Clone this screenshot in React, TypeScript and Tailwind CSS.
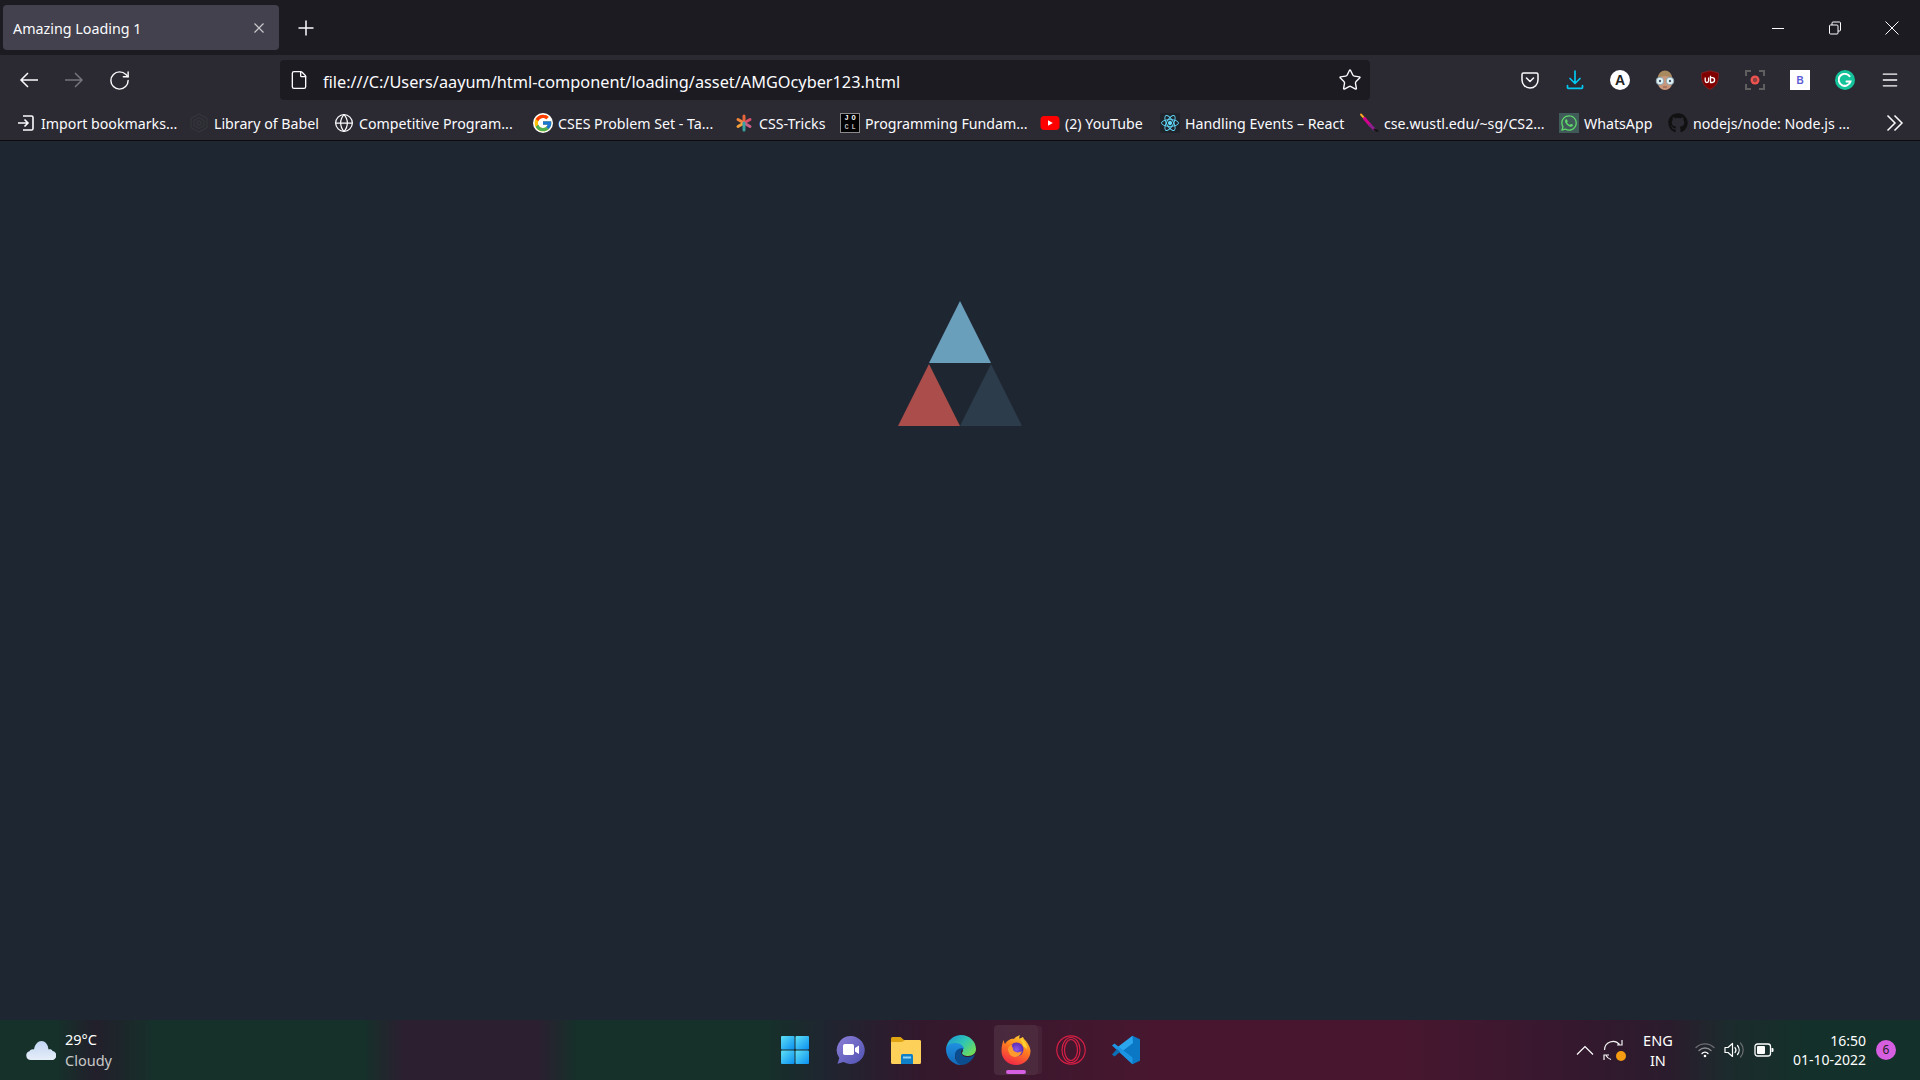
import { File, Globe, Menu, RotateCw, Star } from "lucide-react";
import { FcGoogle } from "react-icons/fc";
import { FaGithub, FaWhatsapp } from "react-icons/fa";

const FONT = "font-['Noto_Sans','Open_Sans',sans-serif]";

function ImportIcon() {
  return (
    <svg width="20" height="20" viewBox="0 0 20 20" fill="none" stroke="#fbfbfe" strokeWidth="1.6">
      <path d="M7 3h8.500a1.500 1.500 0 0 1 1.500 1.500v11a1.500 1.500 0 0 1-1.500 1.500H7" />
      <path d="M2 10h10M8.500 6.500 12 10l-3.500 3.500" />
    </svg>
  );
}

function BabelIcon() {
  return (
    <svg width="20" height="20" viewBox="0 0 20 20" fill="none" stroke="#34343a" strokeWidth="1.4">
      <path d="M10 1 18 5.500v9L10 19l-8-4.500v-9z" />
      <path d="M10 4.500 15 7.300v5.400l-5 2.800-5-2.800V7.300z" />
      <circle cx="10" cy="10" r="2" />
    </svg>
  );
}

function CssTricksIcon() {
  return (
    <svg width="18" height="18" viewBox="0 0 18 18" strokeWidth="3" strokeLinecap="round">
      <path d="M9 9V2" stroke="#e8653a" />
      <path d="M9 9 3 5.500" stroke="#f0863a" />
      <path d="M9 9l6-3.500" stroke="#d8506a" />
      <path d="M9 9 3 12.500" stroke="#f0a03a" />
      <path d="M9 9l6 3.500" stroke="#c9608a" />
      <path d="M9 9v7" stroke="#3aa0a0" />
    </svg>
  );
}

function JoclIcon() {
  return (
    <div className="grid h-5 w-5 grid-cols-2 place-items-center border border-[#8a8a8a] bg-black px-[2px] font-['Liberation_Mono',monospace] text-[7px] leading-[8px] font-bold text-white">
      <span>J</span>
      <span>O</span>
      <span className="text-[#bbbbbb]">C</span>
      <span className="text-[#bbbbbb]">L</span>
    </div>
  );
}

function YoutubeIcon() {
  return (
    <svg width="20" height="20" viewBox="0 0 20 20">
      <rect x="0.500" y="3" width="19" height="14" rx="4" fill="#f00" />
      <path d="M8 7.200v5.600l4.800-2.800z" fill="#fff" />
    </svg>
  );
}

function ReactIcon() {
  return (
    <div className="flex h-5 w-5 items-center justify-center rounded-[2px] bg-[#20232a]">
      <svg width="20" height="20" viewBox="0 0 20 20" fill="none" stroke="#61dafb" strokeWidth="0.900">
        <ellipse cx="10" cy="10" rx="8.500" ry="3.400" />
        <ellipse cx="10" cy="10" rx="8.500" ry="3.400" transform="rotate(60 10 10)" />
        <ellipse cx="10" cy="10" rx="8.500" ry="3.400" transform="rotate(120 10 10)" />
        <circle cx="10" cy="10" r="1.700" fill="#61dafb" />
      </svg>
    </div>
  );
}

function FeatherIcon() {
  return (
    <svg width="20" height="20" viewBox="0 0 20 20" fill="none" strokeWidth="3" strokeLinecap="round">
      <path d="M2 1.500 6 6" stroke="#f5a623" strokeWidth="2" />
      <path d="M5.500 5.500l6 7" stroke="#d6008f" />
      <path d="M11 12l4.500 4.500" stroke="#8e1f8f" />
      <path d="M15.500 16.500l3 1.500" stroke="#151515" strokeWidth="2" />
    </svg>
  );
}

function WhatsappIcon() {
  return (
    <div className="flex h-5 w-5 items-center justify-center bg-[#3f5a58]">
      <FaWhatsapp className="h-[18px] w-[18px] text-[#5fd86a]" />
    </div>
  );
}

const bookmarks = [
  { label: "Import bookmarks...", width: "w-[173px]", icon: <ImportIcon /> },
  { label: "Library of Babel", width: "w-[145px]", icon: <BabelIcon /> },
  { label: "Competitive Program...", width: "w-[199px]", icon: <Globe size={20} strokeWidth={1.5} color="#fbfbfe" /> },
  { label: "CSES Problem Set - Ta...", width: "w-[201px]", icon: <FcGoogle className="h-5 w-5 rounded-full bg-white" /> },
  { label: "CSS-Tricks", width: "w-[106px]", icon: <CssTricksIcon /> },
  { label: "Programming Fundam...", width: "w-[200px]", icon: <JoclIcon /> },
  { label: "(2) YouTube", width: "w-[120px]", icon: <YoutubeIcon /> },
  { label: "Handling Events – React", width: "w-[199px]", icon: <ReactIcon /> },
  { label: "cse.wustl.edu/~sg/CS2...", width: "w-[200px]", icon: <FeatherIcon /> },
  { label: "WhatsApp", width: "w-[109px]", icon: <WhatsappIcon /> },
  { label: "nodejs/node: Node.js ...", width: "w-[200px]", icon: <FaGithub className="h-5 w-5 text-[#111111]" /> },
];

function Pocket() {
  return (
    <svg width="20" height="20" viewBox="0 0 20 20" fill="none" stroke="#fbfbfe" strokeWidth="1.500" strokeLinecap="round" strokeLinejoin="round">
      <path d="M3.500 3h13A1.500 1.500 0 0 1 18 4.500V10a8 8 0 0 1-16 0V4.500A1.500 1.500 0 0 1 3.500 3z" />
      <path d="m6.500 8 3.500 3.500L13.500 8" />
    </svg>
  );
}

function DownloadIcon() {
  return (
    <svg width="20" height="20" viewBox="0 0 20 20" fill="none" stroke="#00c8f0" strokeWidth="1.700" strokeLinecap="round" strokeLinejoin="round">
      <path d="M10 1v12M5 8.500l5 5 5-5M2.500 15.500v2a.8.800 0 0 0 .8.8h13.400a.8.800 0 0 0 .8-.8v-2" />
    </svg>
  );
}

function LetterA() {
  return (
    <div className="flex h-5 w-5 items-center justify-center rounded-full bg-white font-['Liberation_Sans',sans-serif] text-[14px] font-bold text-[#222222]">
      A
    </div>
  );
}

function Glasses() {
  return (
    <svg width="20" height="20" viewBox="0 0 20 20">
      <path d="M3 8a7 7 0 0 1 14 0v5a7 7 0 0 1-14 0z" fill="#c9967a" />
      <path d="M3 8a7 7.500 0 0 1 14 0q-7-4-14 0z" fill="#a98a5f" />
      <circle cx="5" cy="11" r="3.800" fill="#dff2f5" stroke="#8fa3ad" strokeWidth="1" />
      <circle cx="15" cy="11" r="3.800" fill="#dff2f5" stroke="#8fa3ad" strokeWidth="1" />
      <circle cx="5" cy="11" r="1.200" fill="#445566" />
      <circle cx="15" cy="11" r="1.200" fill="#445566" />
      <path d="M8 17h4" stroke="#8a5a4a" strokeWidth="1" />
    </svg>
  );
}

function UBlock() {
  return (
    <svg width="18" height="20" viewBox="0 0 18 20">
      <path d="M9 .8 17.500 3c.3 8-1.500 13-8.500 16.500C2 16 .2 11 .5 3z" fill="#800000" stroke="#8a2a2a" strokeWidth="0.700" />
      <path d="M4.200 7.500v3.300a1.700 1.700 0 0 0 3.400 0V7.500M9.500 5.800v6.700h1.700a2.400 2.400 0 0 0 0-4.800H9.500" fill="none" stroke="#fff" strokeWidth="1.300" />
    </svg>
  );
}

function Recorder() {
  return (
    <svg width="20" height="20" viewBox="0 0 20 20" fill="none">
      <path d="M1 6V1h5M14 1h5v5M19 14v5h-5M6 19H1v-5" stroke="#5f5f5f" strokeWidth="2" />
      <circle cx="10" cy="10" r="4.500" fill="#ef5350" />
      <circle cx="10" cy="10" r="2.200" fill="#8a4040" />
    </svg>
  );
}

function Bitly() {
  return (
    <div className="flex h-5 w-5 items-center justify-center bg-white font-['Liberation_Sans',sans-serif] text-[10px] font-bold text-[#5b5bd6]">
      B
    </div>
  );
}

function Grammarly() {
  return (
    <div className="flex h-5 w-5 items-center justify-center rounded-full bg-[#15c39a]">
      <svg width="14" height="14" viewBox="0 0 14 14" fill="none" stroke="#fff" strokeWidth="2" strokeLinecap="round">
        <path d="M11.500 3.200A6 6 0 1 0 12.500 8.500H8.500" />
      </svg>
    </div>
  );
}

const toolbarIcons = [
  <Pocket key="pocket" />,
  <DownloadIcon key="download" />,
  <LetterA key="a" />,
  <Glasses key="glasses" />,
  <div key="ublock" className="flex w-5 justify-center"><UBlock /></div>,
  <Recorder key="rec" />,
  <Bitly key="bitly" />,
  <Grammarly key="grammarly" />,
  <Menu key="menu" size={20} strokeWidth={1.6} color="#fbfbfe" />,
];

function WinLogo() {
  return (
    <svg width="30" height="30" viewBox="0 0 30 30">
      <defs>
        <linearGradient id="win" x1="0" y1="0" x2="1" y2="1">
          <stop offset="0" stopColor="#5ee0f5" />
          <stop offset="1" stopColor="#0a8ff0" />
        </linearGradient>
      </defs>
      <rect x="1" y="1" width="13.500" height="13.500" rx="1" fill="url(#win)" />
      <rect x="15.500" y="1" width="13.500" height="13.500" rx="1" fill="url(#win)" />
      <rect x="1" y="15.500" width="13.500" height="13.500" rx="1" fill="url(#win)" />
      <rect x="15.500" y="15.500" width="13.500" height="13.500" rx="1" fill="url(#win)" />
    </svg>
  );
}

function ChatLogo() {
  return (
    <svg width="30" height="30" viewBox="0 0 30 30">
      <defs>
        <linearGradient id="chat" x1="0" y1="0" x2="1" y2="1">
          <stop offset="0" stopColor="#8c7fd6" />
          <stop offset="1" stopColor="#4f52b2" />
        </linearGradient>
      </defs>
      <path d="M15.500 1a14 14 0 1 1-7 26l-6 1.800 1.800-5.800A14 14 0 0 1 15.500 1z" fill="url(#chat)" />
      <rect x="8" y="9" width="11" height="11" rx="1.800" fill="#fff" />
      <path d="m20 13 4-2.500v8.500L20 16.500z" fill="#fff" />
    </svg>
  );
}

function FolderLogo() {
  return (
    <svg width="30" height="28" viewBox="0 0 30 28">
      <path d="M0 2.500A1.500 1.500 0 0 1 1.500 1h8l3.500 3h15A2 2 0 0 1 30 6v4H0z" fill="#e0a412" />
      <path d="M0 6h11l3-2h14.500A1.500 1.500 0 0 1 30 5.500v21a1.500 1.500 0 0 1-1.500 1.500h-27A1.500 1.500 0 0 1 0 26.500z" fill="#fdd05a" />
      <path d="M10 19.500A1.500 1.500 0 0 1 11.500 18h9a1.500 1.500 0 0 1 1.500 1.500V28H10z" fill="#0f7fc8" />
      <rect x="12" y="20.500" width="8" height="2" fill="#8fd4f5" />
    </svg>
  );
}

function EdgeLogo() {
  return (
    <svg width="30" height="30" viewBox="0 0 30 30">
      <defs>
        <linearGradient id="edgeA" x1="0" y1="0" x2="1" y2="0.700">
          <stop offset="0" stopColor="#1b8fd8" />
          <stop offset="0.550" stopColor="#2fc4b4" />
          <stop offset="1" stopColor="#6fdc5a" />
        </linearGradient>
        <linearGradient id="edgeB" x1="0" y1="0" x2="0" y2="1">
          <stop offset="0" stopColor="#1f8fe0" />
          <stop offset="1" stopColor="#1268b8" />
        </linearGradient>
      </defs>
      <path d="M0 14C1 5 8 0 15 0c9 0 15 7 15 14 0 4-3 7-8 7-3 0-6-1-6-3 0-1 1-1 1-3 0-3-3-6-7-6-5 0-10 2-10 5z" fill="url(#edgeA)" />
      <path d="M0 14c0-4 5-6 10-6 4 0 8 3 8 6-6 0-9 3-9 7 0 4 3 8 8 9C8 31 0 24 0 14z" fill="url(#edgeB)" />
      <path d="M9 20c0-4 3-7 8-7 0 2-2 2-2 4 0 3 3 5 7 5 3 0 5-1 7-3-2 6-7 11-14 11-3-1-6-5-6-10z" fill="#0b4d8e" />
    </svg>
  );
}

function FirefoxLogo() {
  return (
    <svg width="30" height="30" viewBox="0 0 30 30">
      <defs>
        <linearGradient id="fx" x1="0.700" y1="0" x2="0.300" y2="1">
          <stop offset="0" stopColor="#ffd22e" />
          <stop offset="0.450" stopColor="#ff7a1f" />
          <stop offset="1" stopColor="#f0254a" />
        </linearGradient>
        <radialGradient id="fxc">
          <stop offset="0" stopColor="#8a5ae8" />
          <stop offset="1" stopColor="#5a2bb5" />
        </radialGradient>
      </defs>
      <path d="M2.500 5C3 7 3.500 8 4 9 6 5 11 3 13 4c1-2 4-3 6-4-1 2-1 3 0 4 1-1 2-2 3-2 1 3 3 3 5 7 2 3 2.500 6 2.500 7A14.500 14 0 0 1 .5 16C.5 11 1.500 8 2.500 5z" fill="url(#fx)" />
      <circle cx="15.500" cy="14.500" r="7" fill="url(#fxc)" />
      <path d="M7 14c0-2 2-4 5-5-2 2-1 3 0 4-1 4 5 6 9 3-1 4-4 6-7 6-4 0-7-4-7-8z" fill="#ff9a2e" />
      <path d="M19 3c4 2 7 6 7 11l-4-3c0-3-2-5-3-8z" fill="#ffd22e" />
    </svg>
  );
}

function OperaLogo() {
  return (
    <svg width="30" height="30" viewBox="0 0 30 30" fill="none" stroke="#d71f45" strokeWidth="1.200">
      <circle cx="15" cy="15" r="14.200" />
      <ellipse cx="15" cy="15" rx="9" ry="12.500" />
      <ellipse cx="15" cy="15" rx="6.500" ry="10.500" />
    </svg>
  );
}

function VsCodeLogo() {
  return (
    <svg width="30" height="30" viewBox="0 0 30 30">
      <path d="M21.500 0.800 29 4.200v21.600l-7.500 3.400L6.300 15z" fill="#0a78c4" />
      <path d="M21.500 0.800 22 8l-11 8.500-5-4z" fill="#2aa5ee" />
      <path d="M1 10.500l2.500-2 18 14v6.700z" fill="#1b95e3" />
      <path d="M1 19.500l2.500 2L9 17l-3-3z" fill="#0a6fb5" />
    </svg>
  );
}

function Battery() {
  return (
    <svg width="20" height="14" viewBox="0 0 20 14" fill="none">
      <rect x="1" y="1" width="15.500" height="12" rx="2.500" stroke="#ffffff" strokeWidth="1.300" />
      <rect x="3" y="3" width="8" height="8" rx="1" fill="#ffffff" />
      <path d="M17.500 5h1a1 1 0 0 1 1 1v2a1 1 0 0 1-1 1h-1z" fill="#ffffff" />
    </svg>
  );
}

function SyncIcon() {
  return (
    <div className="relative h-[22px] w-[22px]">
      <svg width="22" height="22" viewBox="0 0 22 22" fill="none" stroke="#f4f4f4" strokeWidth="1.200">
        <path d="M1.500 11a8.500 8.500 0 0 1 15-5.500M19 1v5h-5" />
        <path d="M8 20.500A8.500 8.500 0 0 1 3 16.500M1 21v-5h5" />
      </svg>
      <span className="absolute right-[-1px] bottom-[0px] h-[10px] w-[10px] rounded-full bg-[#f59c12]" />
    </div>
  );
}

function WifiIcon() {
  return (
    <svg width="20" height="16" viewBox="0 0 20 16" fill="none" strokeWidth="1.300" strokeLinecap="round">
      <path d="M1 5.500a13 13 0 0 1 18 0" stroke="#6d6d72" />
      <path d="M4 8.500a8.500 8.500 0 0 1 12 0" stroke="#8d8d92" />
      <path d="M7 11.500a4 4 0 0 1 6 0" stroke="#ffffff" />
      <circle cx="10" cy="14" r="1.300" fill="#ffffff" stroke="none" />
    </svg>
  );
}

function SpeakerIcon() {
  return (
    <svg width="20" height="20" viewBox="0 0 20 20" fill="none" stroke="#ffffff" strokeWidth="1.200" strokeLinejoin="round" strokeLinecap="round">
      <path d="M1 7.500h3L8.500 3.500v13L4 12.500H1z" />
      <path d="M11 7.500a4 4 0 0 1 0 5M13.500 5.500a7 7 0 0 1 0 9" />
      <path d="M16.500 3a10.500 10.500 0 0 1 0 14" stroke="#6d6d72" />
    </svg>
  );
}

export default function App() {
  return (
    <div className={`flex h-screen w-full flex-col overflow-hidden bg-[#1e2631] ${FONT} text-[#fbfbfe]`}>
      <div className="flex h-[55px] items-start bg-[#1c1b22] pt-[5px]">
        <div className="ml-[3px] flex h-[45px] w-[276px] items-center justify-between rounded-[4px] bg-[#42414d] pr-[14px] pl-[10px] text-[14.300px]">
          <span className="pt-[3px]">Amazing Loading 1</span>
          <svg width="12" height="12" viewBox="0 0 12 12" stroke="#c8c8cd" strokeWidth="1.200">
            <path d="m1.500 1.500 9 9M10.500 1.500l-9 9" />
          </svg>
        </div>
        <div className="ml-[17px] flex h-[45px] w-5 items-center justify-center">
          <svg width="16" height="16" viewBox="0 0 16 16" stroke="#fbfbfe" strokeWidth="1.500">
            <path d="M8 .5v15M.5 8h15" />
          </svg>
        </div>
        <div className="ml-auto flex h-[45px] items-center gap-[37px] pr-[18px]">
          <svg width="20" height="20" viewBox="0 0 20 20" stroke="#fbfbfe" strokeWidth="1">
            <path d="M4 10.500h12" />
          </svg>
          <svg width="20" height="20" viewBox="0 0 20 20" fill="none" stroke="#fbfbfe" strokeWidth="1">
            <rect x="4.500" y="7" width="8.500" height="9" rx="1" />
            <path d="M7 7V5a1 1 0 0 1 1-1h6.500a1 1 0 0 1 1 1v7a1 1 0 0 1-1 1H13" />
          </svg>
          <svg width="20" height="20" viewBox="0 0 20 20" stroke="#fbfbfe" strokeWidth="1">
            <path d="m3.500 3.500 13 13M16.500 3.500l-13 13" />
          </svg>
        </div>
      </div>

      <div className="flex h-[45px] items-start bg-[#2b2a33] pt-[5px]">
        <div className="flex h-[40px] w-[280px] items-center gap-[23px] pl-[18px]">
          <svg width="22" height="20" viewBox="0 0 22 20" fill="none" stroke="#fbfbfe" strokeWidth="1.500">
            <path d="M20 10H3M10 3l-7 7 7 7" />
          </svg>
          <svg width="22" height="20" viewBox="0 0 22 20" fill="none" stroke="#75747b" strokeWidth="1.500">
            <path d="M2 10h17M12 3l7 7-7 7" />
          </svg>
          <RotateCw size={23} strokeWidth={1.5} />
        </div>
        <div className="flex h-[40px] w-[1090px] items-center rounded-[4px] bg-[#1c1b22] pr-[8px] pl-[9px] text-[16.300px]">
          <File size={20} strokeWidth={1.6} />
          <span className="ml-[14px] pt-[5px]">file:///C:/Users/aayum/html-component/loading/asset/AMGOcyber123.html</span>
          <Star size={24} strokeWidth={1.4} className="ml-auto" />
        </div>
        <div className="flex h-[40px] flex-1 items-center justify-end gap-[25px] pr-[20px]">{toolbarIcons}</div>
      </div>

      <div className="flex h-[40px] items-center bg-[#2b2a33] pt-[6px] pl-[16px] text-[14.200px]">
        {bookmarks.map((b) => (
          <div key={b.label} className={`flex items-center gap-[5px] whitespace-nowrap ${b.width}`}>
            <div className="flex h-5 w-5 shrink-0 items-center justify-center">{b.icon}</div>
            <span className="pt-[1px]">{b.label}</span>
          </div>
        ))}
        <svg width="18" height="18" viewBox="0 0 18 18" fill="none" stroke="#fbfbfe" strokeWidth="1.500" className="ml-[18px]">
          <path d="m1.500 1.500 7.500 7.500-7.500 7.500M8.500 1.500l7.500 7.500-7.500 7.500" />
        </svg>
      </div>
      <div className="h-[1px] bg-[#0c0c0d]" />

      <main className="flex flex-1 justify-center pt-[160px]">
        <svg width="124" height="125" viewBox="0 0 124 125" className="shrink-0">
          <path d="M62 0 93 62H31z" fill="#6a9fbc" />
          <path d="M31 63 62 125H0z" fill="#ab4d4a" />
          <path d="M93 63l31 62H62z" fill="#2c3c4b" />
        </svg>
      </main>

      <footer className="grid h-[60px] grid-cols-[1fr_auto_1fr] items-center bg-[linear-gradient(90deg,#16302a_0%,#16302a_3%,#221f2b_5%,#16302a_8%,#16302a_19%,#2b1f30_21%,#2b1f30_28%,#16302a_30%,#16302a_40%,#1f2530_43%,#33182c_48%,#48172f_60%,#48172f_73%,#35182e_82%,#2a1c2c_87%,#1c2b2d_90%,#14302a_94%,#14302a_100%)] text-white">
        <div className="flex items-center pl-[26px]">
          <svg width="30" height="21" viewBox="0 0 30 21">
            <defs>
              <linearGradient id="cloud" x1="0" y1="0" x2="0" y2="1">
                <stop offset="0" stopColor="#c2d6f5" />
                <stop offset="1" stopColor="#e6eef8" />
              </linearGradient>
            </defs>
            <path d="M5 20a4.500 4.500 0 0 1-1.500-8.800C4 10 6 9 8 9.500 9 4 12 1 15.500 1S22 4 22.500 9.500c2-.5 3.500 0 4 1.500A4.500 4.500 0 0 1 25 20z" fill="url(#cloud)" />
          </svg>
          <div className="ml-[9px] text-[14.500px] leading-[21px]">
            <div>29°C</div>
            <div className="text-[#c8c8c8]">Cloudy</div>
          </div>
        </div>

        <div className="relative flex items-center">
          <div className="flex h-[50px] w-[44px] items-center justify-center"><WinLogo /></div>
          <div className="ml-[11px] flex h-[50px] w-[44px] items-center justify-center"><ChatLogo /></div>
          <div className="ml-[12px] flex h-[50px] w-[44px] items-center justify-center"><FolderLogo /></div>
          <div className="ml-[11px] flex h-[50px] w-[44px] items-center justify-center"><EdgeLogo /></div>
          <div className="relative ml-[11px] flex h-[50px] w-[44px] items-center justify-center rounded-[4px] bg-[#ffffff14] shadow-[5px_0_0_-1px_#ffffff0d]">
            <FirefoxLogo />
            <span className="absolute bottom-[1px] left-[12px] h-[4px] w-[20px] rounded-full bg-[#d65ee0]" />
          </div>
          <div className="ml-[11px] flex h-[50px] w-[44px] items-center justify-center"><OperaLogo /></div>
          <div className="ml-[11px] flex h-[50px] w-[44px] items-center justify-center"><VsCodeLogo /></div>
        </div>

        <div className="flex items-center justify-end pr-[24px]">
          <svg width="18" height="10" viewBox="0 0 18 10" fill="none" stroke="#ffffff" strokeWidth="1.200">
            <path d="m1 9.500 8-8 8 8" />
          </svg>
          <div className="ml-[9px]"><SyncIcon /></div>
          <div className="ml-[13px] w-[40px] text-center text-[14.500px] leading-[20px]">
            ENG
            <br />
            IN
          </div>
          <div className="ml-[17px]"><WifiIcon /></div>
          <div className="ml-[9px]"><SpeakerIcon /></div>
          <div className="ml-[10px]"><Battery /></div>
          <div className="ml-[19px] text-right text-[14px] leading-[19px]">
            <div>16:50</div>
            <div>01-10-2022</div>
          </div>
          <div className="ml-[10px] flex h-5 w-5 items-center justify-center rounded-full bg-[#d65ee0] text-[12px] text-[#222222]">6</div>
        </div>
      </footer>
    </div>
  );
}
